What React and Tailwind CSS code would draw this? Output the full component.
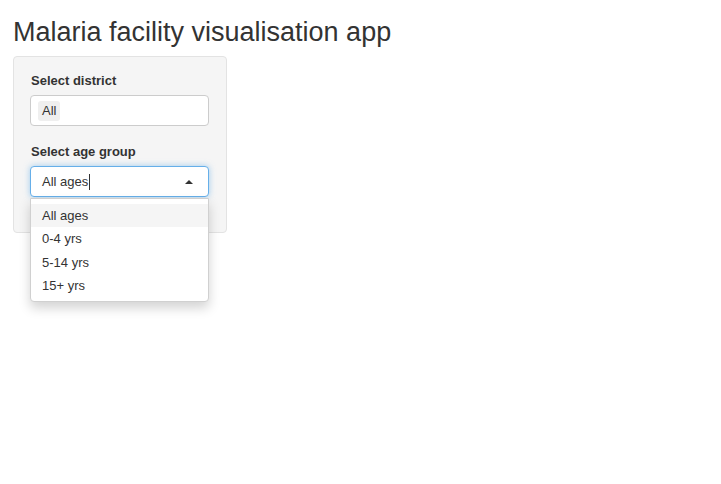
import React from 'react';

const ages = ['All ages', '0-4 yrs', '5-14 yrs', '15+ yrs'];

const App = () => {
  return (
    <div className="min-h-[484px] bg-white px-[13px] text-[#333333] font-['Liberation_Sans',Arial,sans-serif]">
      <h2 className="pt-[16px] pb-[7px] text-[27px] leading-[33px] font-normal">Malaria facility visualisation app</h2>

      <div className="w-[214px] h-[177px] rounded-[4px] border border-[#e3e3e3] bg-[#f5f5f5] pl-[16px] pr-[17px] pt-[15px]">
        <label className="block pl-[1px] text-[13px] font-bold leading-[18px] mb-[5px]">Select district</label>
        <div className="flex items-center h-[31px] rounded-[4px] border border-[#cccccc] bg-white px-[7px]">
          <span className="rounded-[3px] bg-[#efefef] px-[4px] text-[13px] leading-[20px]">All</span>
        </div>

        <label className="block pl-[1px] mt-[17px] text-[13px] font-bold leading-[18px] mb-[5px]">Select age group</label>
        <div className="relative">
          <div className="flex items-center h-[31px] rounded-[4px] border border-[#66afe9] bg-white pl-[11px] pr-[15px] shadow-[0_0_6px_rgba(102,175,233,0.6)]">
            <span className="text-[13px] leading-[18px]">All ages</span>
            <span className="ml-[1px] h-[16px] w-[1px] bg-[#333333]"></span>
            <span className="ml-auto h-0 w-0 border-x-[4px] border-b-[4px] border-x-transparent border-b-[#333333]"></span>
          </div>
          <div className="absolute left-0 right-0 top-[32px] rounded-b-[4px] border border-[#d0d0d0] bg-white pt-[5px] pb-[4px] shadow-[0_6px_12px_rgba(0,0,0,0.175)] z-10">
            {ages.map((a, i) => (
              <div
                key={a}
                className={`px-[11px] text-[13px] leading-[23.3px] ${i === 0 ? 'bg-[#f5f5f5]' : ''}`}
              >
                {a}
              </div>
            ))}
          </div>
        </div>
      </div>
    </div>
  );
};

export default App;
